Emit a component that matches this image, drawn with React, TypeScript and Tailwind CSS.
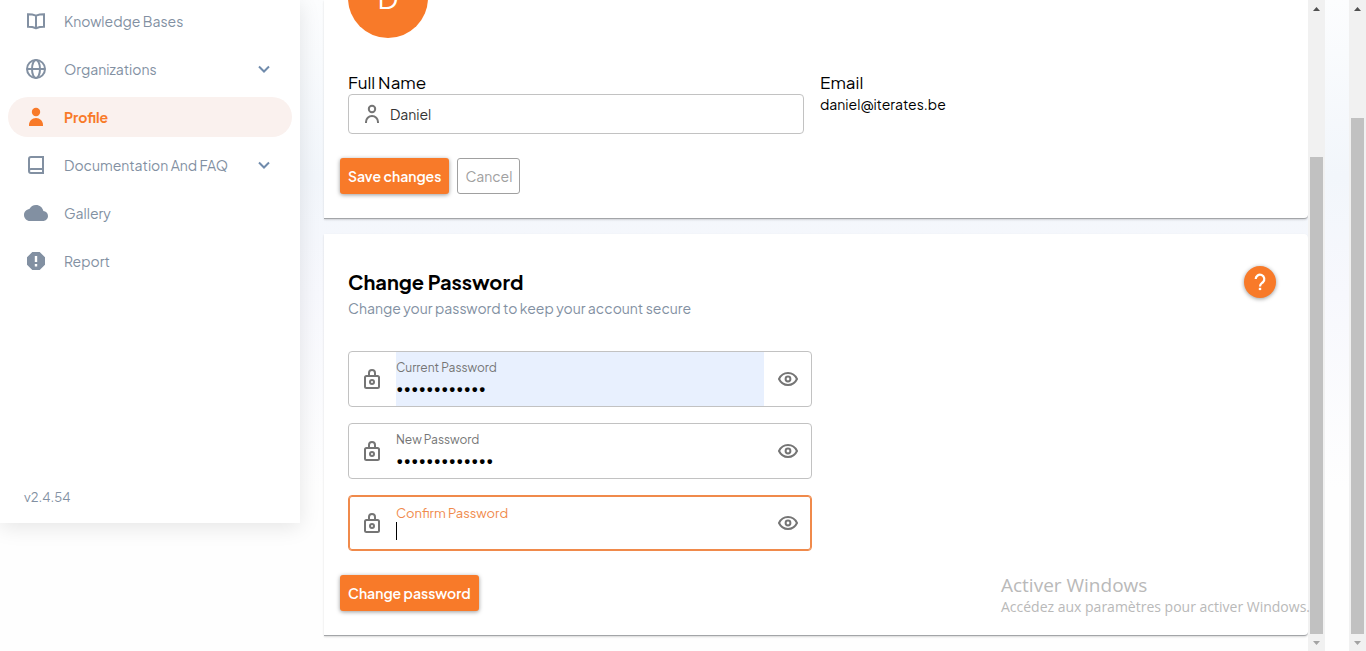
import { useState } from 'react';
import type { ReactNode } from 'react';

type IconProps = { className?: string };

function StrokeIcon({ className = '', children }: IconProps & { children: ReactNode }) {
  return (
    <svg viewBox="0 0 24 24" className={`size-6 shrink-0 ${className}`} fill="none" stroke="currentColor" strokeWidth="2" aria-hidden="true">
      {children}
    </svg>
  );
}

const BookOpenIcon = () => (
  <StrokeIcon>
    <path d="M4 5.2c3 0 5.500.4 8 1.400 2.500-1 5-1.400 8-1.400v12.600c-3 0-5.500.4-8 1.400-2.500-1-5-1.400-8-1.400zM12 6.500V19" />
  </StrokeIcon>
);

const GlobeIcon = () => (
  <StrokeIcon>
    <circle cx="12" cy="12" r="9" />
    <ellipse cx="12" cy="12" rx="4" ry="9" />
    <path d="M3 12h18" />
  </StrokeIcon>
);

const PersonIcon = () => (
  <svg viewBox="0 0 24 24" className="size-6 shrink-0" fill="currentColor" aria-hidden="true">
    <circle cx="12" cy="7" r="4.200" />
    <path d="M5 21v-1c0-3.900 3.100-7 7-7s7 3.100 7 7v1z" />
  </svg>
);

const BookIcon = () => (
  <StrokeIcon>
    <path d="M19 17V4H7a2 2 0 0 0-2 2v12a2 2 0 0 0 2 2h12v-4H7a2 2 0 0 0-2 2" />
  </StrokeIcon>
);

const CloudIcon = () => (
  <svg viewBox="0 0 24 24" className="size-6 shrink-0" fill="currentColor" aria-hidden="true">
    <path d="M19.350 10.040C18.670 6.590 15.640 4 12 4 9.110 4 6.600 5.640 5.350 8.040 2.340 8.360 0 10.910 0 14c0 3.310 2.690 6 6 6h13c2.760 0 5-2.240 5-5 0-2.640-2.050-4.780-4.650-4.960z" />
  </svg>
);

const ReportIcon = () => (
  <svg viewBox="0 0 24 24" className="size-6 shrink-0" fill="currentColor" aria-hidden="true">
    <path fillRule="evenodd" d="M8.300 3h7.400L21 8.300v7.400L15.700 21H8.300L3 15.700V8.300zM10.800 7v6h2.400V7zm0 8v2.400h2.400V15z" />
  </svg>
);

const ChevronIcon = () => (
  <StrokeIcon>
    <path d="m7 9.500 5 5 5-5" />
  </StrokeIcon>
);

const UserIcon = () => (
  <StrokeIcon>
    <circle cx="12" cy="7" r="3.200" />
    <path d="M6 21v-1c0-3.300 2.700-6 6-6s6 2.700 6 6v1" />
  </StrokeIcon>
);

const LockIcon = () => (
  <StrokeIcon>
    <rect x="5" y="9" width="14" height="12" rx="1.500" />
    <path d="M9 9V6a3 3 0 0 1 6 0v3" />
    <circle cx="12" cy="15" r="2" />
  </StrokeIcon>
);

const EyeIcon = () => (
  <StrokeIcon>
    <path d="M3 12c1.800-3.800 5.200-6 9-6s7.200 2.200 9 6c-1.800 3.800-5.200 6-9 6s-7.200-2.200-9-6z" />
    <circle cx="12" cy="12" r="2.400" />
  </StrokeIcon>
);

const navItems = [
  { label: 'Knowledge Bases', icon: <BookOpenIcon /> },
  { label: 'Organizations', icon: <GlobeIcon />, expandable: true },
  { label: 'Profile', icon: <PersonIcon />, active: true },
  { label: 'Documentation And FAQ', icon: <BookIcon />, expandable: true },
  { label: 'Gallery', icon: <CloudIcon /> },
  { label: 'Report', icon: <ReportIcon /> },
];

function Sidebar() {
  return (
    <aside className="relative flex h-[523px] w-[300px] shrink-0 flex-col justify-between bg-white shadow-[0_4px_20px_rgba(0,0,0,0.1)]">
      <nav className="flex flex-col gap-2 px-2 pt-px">
        {navItems.map((item) => (
          <a
            key={item.label}
            href="#"
            className={`flex h-10 items-center gap-4 rounded-full pr-4 pl-4 text-sm ${
              item.active ? 'bg-[#faf1ee] font-bold text-[#f87a29]' : 'text-[#8290a2]'
            }`}
          >
            {item.icon}
            <span className="flex-1">{item.label}</span>
            {item.expandable && (
              <span className="text-[#708bac]">
                <ChevronIcon />
              </span>
            )}
          </a>
        ))}
      </nav>
      <p className="px-6 pb-4 text-[13px] leading-5 text-[#8290a2]">v2.4.54</p>
    </aside>
  );
}

function ProfileCard() {
  return (
    <section className="rounded-br border-b border-[#a3a5a8] bg-white pr-8 pb-6 pl-6 shadow-[0_1px_2px_rgba(0,0,0,0.15)]">
      <div className="flex h-[38px] items-end overflow-hidden">
        <div className="flex size-20 shrink-0 items-center justify-center rounded-full bg-[#f87a29] text-[28px] leading-10 text-white">D</div>
      </div>
      <div className="grid grid-cols-2 gap-4 pt-8">
        <div>
          <label htmlFor="full-name" className="block text-[17px] leading-6 text-black">Full Name</label>
          <div className="flex h-10 items-center gap-1.5 rounded border border-[#c2c2c2] px-[11px] text-[#757575]">
            <UserIcon />
            <input id="full-name" defaultValue="Daniel" className="min-w-0 flex-1 text-sm text-[#333] outline-none" />
          </div>
        </div>
        <div>
          <p className="text-[17px] leading-6 text-black">Email</p>
          <p className="text-sm text-black">daniel@iterates.be</p>
        </div>
      </div>
      <div className="-ml-2 flex gap-2 pt-6">
        <button className="h-9 rounded-[3px] bg-[#f87a29] px-2 text-sm font-semibold text-white shadow-[0_1px_4px_rgba(0,0,0,0.4)]">
          Save changes
        </button>
        <button className="h-9 rounded-[3px] border border-[#a0a0a0] px-[7px] text-sm text-[#a0a0a0]">Cancel</button>
      </div>
    </section>
  );
}

type PasswordFieldProps = { id: string; label: string; value?: string; autofilled?: boolean; focused?: boolean };

function PasswordField({ id, label, value = '', autofilled, focused }: PasswordFieldProps) {
  const [visible, setVisible] = useState(false);

  return (
    <div
      className={`flex h-14 overflow-hidden rounded border text-[#757575] ${
        focused ? 'border-[#f08a4b] ring-1 ring-[#f08a4b] ring-inset' : 'border-[#c2c2c2]'
      }`}
    >
      <span className="flex w-[47px] shrink-0 items-center pl-[11px]">
        <LockIcon />
      </span>
      <div className={`relative flex min-w-0 flex-1 flex-col justify-center pb-0.5 ${autofilled ? 'bg-[#e8f0fe]' : ''}`}>
        <label htmlFor={id} className={`leading-5 ${focused ? 'pt-0.5 text-[13px] text-[#f08a4b]' : 'text-xs text-[#757575]'}`}>
          {label}
        </label>
        <input
          id={id}
          type={visible ? 'text' : 'password'}
          defaultValue={value}
          className="h-5 w-full text-sm leading-5 text-black outline-none"
        />
        {focused && <span className="absolute bottom-2.5 left-0 h-[18px] w-px bg-black" />}
      </div>
      <button type="button" aria-label="Show password" onClick={() => setVisible(!visible)} className="flex w-[47px] shrink-0 items-center justify-center">
        <EyeIcon />
      </button>
    </div>
  );
}

function PasswordCard() {
  return (
    <section className="rounded-r border-b border-[#a3a5a8] bg-white pt-8 pr-8 pb-6 pl-6 shadow-[0_1px_2px_rgba(0,0,0,0.15)]">
      <div className="flex justify-between">
        <div>
          <h2 className="text-xl leading-8 font-bold text-black">Change Password</h2>
          <p className="text-sm text-[#8290a2]">Change your password to keep your account secure</p>
        </div>
        <button
          aria-label="Help"
          className="flex size-8 items-center justify-center rounded-full bg-[#f87a29] text-white shadow-[0_1px_4px_rgba(0,0,0,0.4)]"
        >
          <svg viewBox="0 0 24 24" className="size-6" fill="none" stroke="currentColor" strokeWidth="2.200" aria-hidden="true">
            <path d="M7.700 9.100a4.300 4.300 0 1 1 7.300 3c-1.500 1.400-3 2-3 4.300" />
            <path d="M12 17.800v2.300" strokeWidth="2.400" />
          </svg>
        </button>
      </div>
      <div className="flex w-1/2 flex-col gap-4 pt-[33px]">
        <PasswordField id="current-password" label="Current Password" value="currentpass1" autofilled />
        <PasswordField id="new-password" label="New Password" value="newpassword12" />
        <PasswordField id="confirm-password" label="Confirm Password" focused />
      </div>
      <button className="mt-6 -ml-2 h-9 rounded-[3px] bg-[#f87a29] px-2 text-sm font-semibold text-white shadow-[0_1px_4px_rgba(0,0,0,0.4)]">
        Change password
      </button>
    </section>
  );
}

function Scrollbar({ children }: { children: ReactNode }) {
  return (
    <div className="flex w-[17px] shrink-0 flex-col bg-[#f1f1f1]" aria-hidden="true">
      <svg viewBox="0 0 17 17" className="size-[17px]" fill="#505050">
        <path d="M8.500 7 12 11H5z" />
      </svg>
      <div className="flex flex-1 flex-col px-0.5">{children}</div>
      <svg viewBox="0 0 17 17" className="size-[17px]" fill="#a3a3a3">
        <path d="M8.500 11 12 7H5z" />
      </svg>
    </div>
  );
}

export default function App() {
  return (
    <div className="relative flex h-screen overflow-hidden bg-linear-[180deg,#fcfdfe_0%,#f2f6fb_27%,#f7f8fd_45%,#fefefe_75%] font-['Plus_Jakarta_Sans',Inter,sans-serif]">
      <Sidebar />
      <main className="flex min-w-0 flex-1 flex-col gap-[15px] pl-6">
        <ProfileCard />
        <PasswordCard />
      </main>
      <Scrollbar>
        <div className="flex-[140]" />
        <div className="flex-[477] bg-[#c1c1c1]" />
      </Scrollbar>
      <div className="w-6 shrink-0" />
      <Scrollbar>
        <div className="flex-[101]" />
        <div className="flex-[516] bg-[#c1c1c1]" />
      </Scrollbar>
      <div className="pointer-events-none absolute right-14 bottom-[34px] font-['Segoe_UI','Open_Sans',sans-serif] text-[#b9b9b9]">
        <p className="text-[19px] leading-6">Activer Windows</p>
        <p className="text-sm">Accédez aux paramètres pour activer Windows.</p>
      </div>
    </div>
  );
}
